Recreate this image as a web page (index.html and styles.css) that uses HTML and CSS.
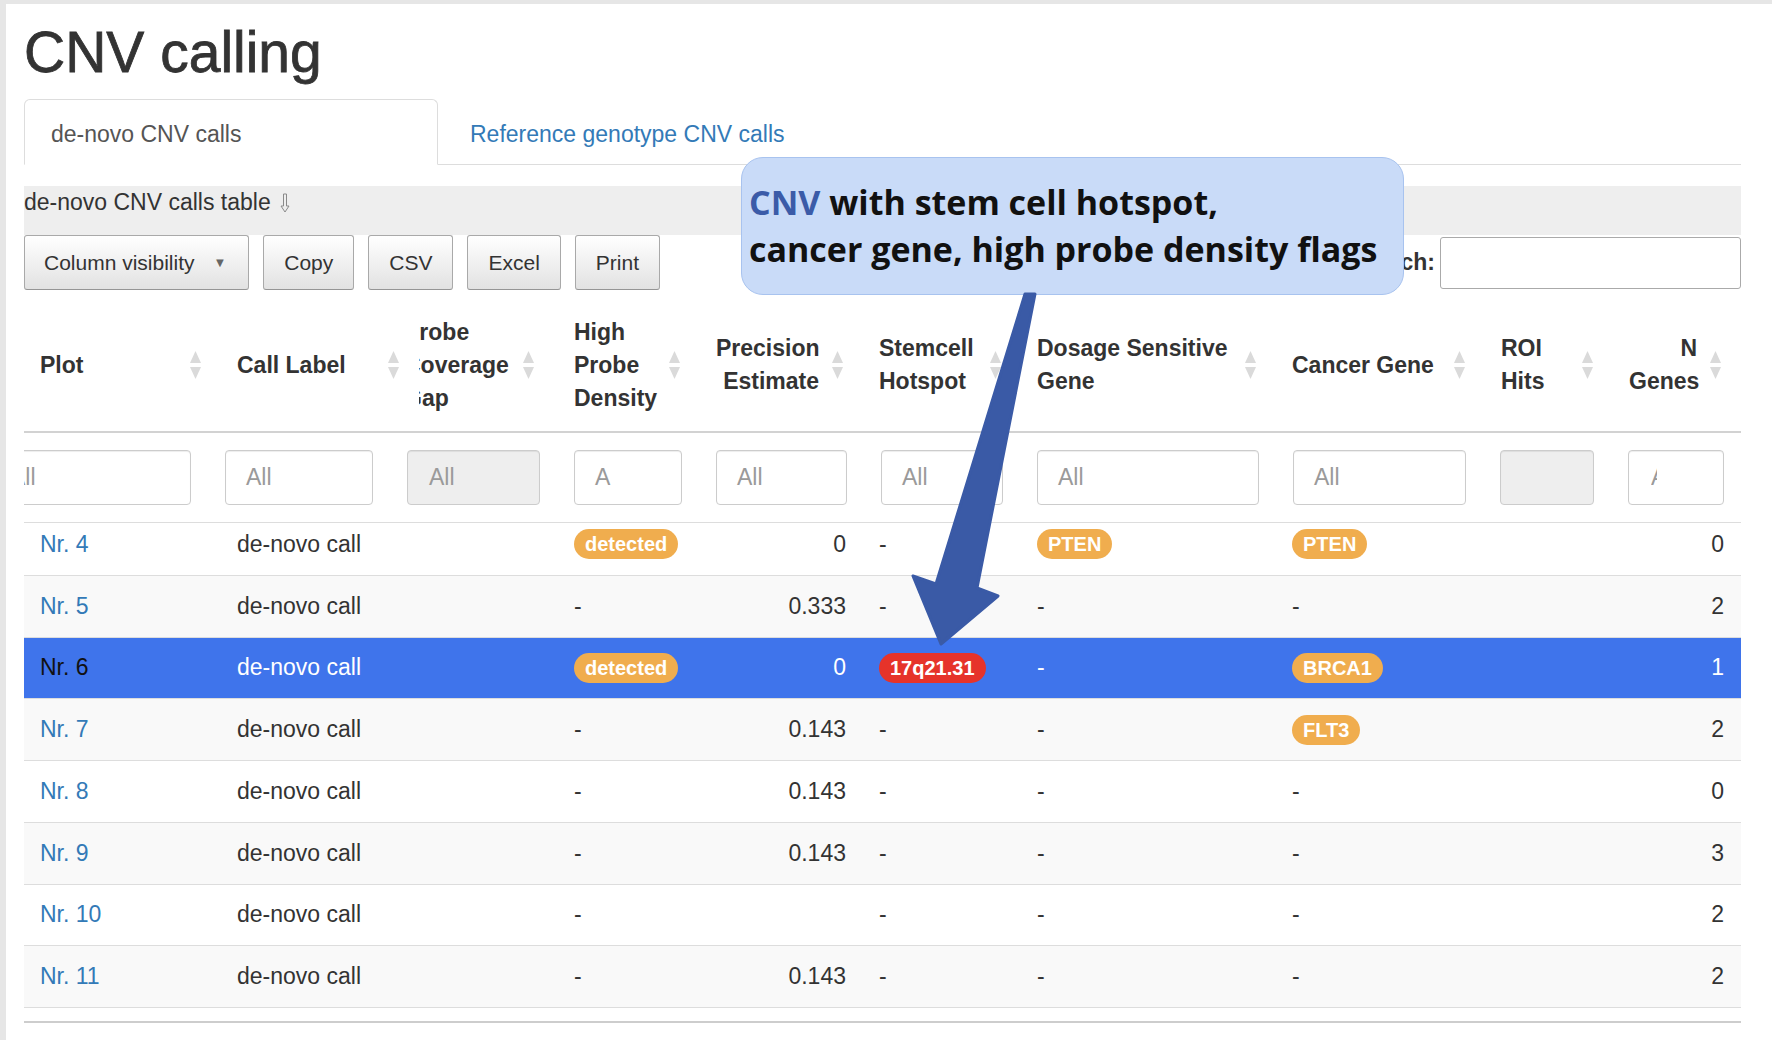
FILE: index.html
```html
<!DOCTYPE html>
<html>
<head>
<meta charset="utf-8">
<title>CNV calling</title>
<link rel="stylesheet" href="styles.css">
</head>
<body>
<div class="page">
  <h1 class="title">CNV calling</h1>
  <ul class="tabs">
    <li class="tab active"><a>de-novo CNV calls</a></li>
    <li class="tab"><a>Reference genotype CNV calls</a></li>
  </ul>
  <div class="caption">de-novo CNV calls table <svg class="cap-arrow" width="10" height="20" viewBox="0 0 10 20"><path d="M3.5 1 H6.5 V13 H9 L5 19 L1 13 H3.5 Z" fill="none" stroke="#8a8a8a" stroke-width="1"/></svg></div>
  <div class="controls">
    <div class="buttons">
      <button class="btn btn-colvis">Column visibility <span class="caret">&#9660;</span></button>
      <button class="btn">Copy</button>
      <button class="btn">CSV</button>
      <button class="btn">Excel</button>
      <button class="btn">Print</button>
    </div>
    <div class="search"><span class="search-label">Search:</span><span class="search-input"></span></div>
  </div>

  <div class="cols head">
    <div class="th"><span class="lbl">Plot</span><svg class="sort" viewBox="0 0 11 28"><polygon points="5.5,0 11,12 0,12"/><polygon points="0,16 11,16 5.5,28"/></svg></div>
    <div class="th"><span class="lbl">Call Label</span><svg class="sort" viewBox="0 0 11 28"><polygon points="5.5,0 11,12 0,12"/><polygon points="0,16 11,16 5.5,28"/></svg></div>
    <div class="th clip"><span class="lbl"><span class="shift">Probe<br>Coverage<br>Gap</span></span><svg class="sort" viewBox="0 0 11 28"><polygon points="5.5,0 11,12 0,12"/><polygon points="0,16 11,16 5.5,28"/></svg></div>
    <div class="th"><span class="lbl">High<br>Probe<br>Density</span><svg class="sort" viewBox="0 0 11 28"><polygon points="5.5,0 11,12 0,12"/><polygon points="0,16 11,16 5.5,28"/></svg></div>
    <div class="th num"><span class="lbl">Precision<br>Estimate</span><svg class="sort" viewBox="0 0 11 28"><polygon points="5.5,0 11,12 0,12"/><polygon points="0,16 11,16 5.5,28"/></svg></div>
    <div class="th"><span class="lbl">Stemcell<br>Hotspot</span><svg class="sort" viewBox="0 0 11 28"><polygon points="5.5,0 11,12 0,12"/><polygon points="0,16 11,16 5.5,28"/></svg></div>
    <div class="th"><span class="lbl">Dosage Sensitive<br>Gene</span><svg class="sort" viewBox="0 0 11 28"><polygon points="5.5,0 11,12 0,12"/><polygon points="0,16 11,16 5.5,28"/></svg></div>
    <div class="th"><span class="lbl">Cancer Gene</span><svg class="sort" viewBox="0 0 11 28"><polygon points="5.5,0 11,12 0,12"/><polygon points="0,16 11,16 5.5,28"/></svg></div>
    <div class="th"><span class="lbl">ROI<br>Hits</span><svg class="sort" viewBox="0 0 11 28"><polygon points="5.5,0 11,12 0,12"/><polygon points="0,16 11,16 5.5,28"/></svg></div>
    <div class="th num"><span class="lbl">N<br>Genes</span><svg class="sort" viewBox="0 0 11 28"><polygon points="5.5,0 11,12 0,12"/><polygon points="0,16 11,16 5.5,28"/></svg></div>
  </div>

  <div class="filters">
    <div class="f f-plot">All</div>
    <div class="f f-call">All</div>
    <div class="f f-probe disabled">All</div>
    <div class="f f-high">A</div>
    <div class="f f-prec">All</div>
    <div class="f f-stem">All</div>
    <div class="f f-dos">All</div>
    <div class="f f-can">All</div>
    <div class="f f-roi disabled"></div>
    <div class="f f-n"><span class="cut">A</span></div>
  </div>

  <div class="tbody">
    <div class="rows">
      <div class="cols row">
        <div class="td"><a class="link">Nr. 4</a></div><div class="td">de-novo call</div><div class="td"></div>
        <div class="td"><span class="badge">detected</span></div><div class="td num">0</div><div class="td">-</div>
        <div class="td"><span class="badge">PTEN</span></div><div class="td"><span class="badge">PTEN</span></div><div class="td"></div><div class="td num">0</div>
      </div>
      <div class="cols row alt">
        <div class="td"><a class="link">Nr. 5</a></div><div class="td">de-novo call</div><div class="td"></div>
        <div class="td">-</div><div class="td num">0.333</div><div class="td">-</div>
        <div class="td">-</div><div class="td">-</div><div class="td"></div><div class="td num">2</div>
      </div>
      <div class="cols row sel">
        <div class="td"><a class="link">Nr. 6</a></div><div class="td">de-novo call</div><div class="td"></div>
        <div class="td"><span class="badge">detected</span></div><div class="td num">0</div><div class="td"><span class="badge red">17q21.31</span></div>
        <div class="td">-</div><div class="td"><span class="badge">BRCA1</span></div><div class="td"></div><div class="td num">1</div>
      </div>
      <div class="cols row alt">
        <div class="td"><a class="link">Nr. 7</a></div><div class="td">de-novo call</div><div class="td"></div>
        <div class="td">-</div><div class="td num">0.143</div><div class="td">-</div>
        <div class="td">-</div><div class="td"><span class="badge">FLT3</span></div><div class="td"></div><div class="td num">2</div>
      </div>
      <div class="cols row">
        <div class="td"><a class="link">Nr. 8</a></div><div class="td">de-novo call</div><div class="td"></div>
        <div class="td">-</div><div class="td num">0.143</div><div class="td">-</div>
        <div class="td">-</div><div class="td">-</div><div class="td"></div><div class="td num">0</div>
      </div>
      <div class="cols row alt">
        <div class="td"><a class="link">Nr. 9</a></div><div class="td">de-novo call</div><div class="td"></div>
        <div class="td">-</div><div class="td num">0.143</div><div class="td">-</div>
        <div class="td">-</div><div class="td">-</div><div class="td"></div><div class="td num">3</div>
      </div>
      <div class="cols row">
        <div class="td"><a class="link">Nr. 10</a></div><div class="td">de-novo call</div><div class="td"></div>
        <div class="td">-</div><div class="td num"></div><div class="td">-</div>
        <div class="td">-</div><div class="td">-</div><div class="td"></div><div class="td num">2</div>
      </div>
      <div class="cols row alt">
        <div class="td"><a class="link">Nr. 11</a></div><div class="td">de-novo call</div><div class="td"></div>
        <div class="td">-</div><div class="td num">0.143</div><div class="td">-</div>
        <div class="td">-</div><div class="td">-</div><div class="td"></div><div class="td num">2</div>
      </div>
    </div>
  </div>
</div>

<div class="callout"><span class="cnv">CNV</span> with stem cell hotspot,<br>cancer gene, high probe density flags</div>
<svg class="arrow" width="1772" height="1040" viewBox="0 0 1772 1040">
  <polygon points="1025,294 1035,294 977,588 998,596 941,644 913,576 936,584" fill="#3a5aa6" stroke="#3a5aa6" stroke-width="3" stroke-linejoin="round"/>
</svg>
</body>
</html>
```

FILE: styles.css
```css
* { box-sizing: border-box; }

html, body {
  margin: 0;
  padding: 0;
}

body {
  background: #e6e6e6;
  font-family: "Liberation Sans", Arial, Helvetica, sans-serif;
  font-size: 23px;
  color: #333;
  position: relative;
  width: 1772px;
  height: 1040px;
  overflow: hidden;
}

.page {
  margin: 4px 0 0 6px;
  padding: 16px 31px 0 18px;
  background: #fff;
  height: 1036px;
}

.title {
  margin: 0 0 15px;
  font-size: 57px;
  line-height: 64px;
  font-weight: 400;
  color: #333;
  -webkit-text-stroke: 0.8px #333;
}

/* tabs */
.tabs {
  list-style: none;
  margin: 0;
  padding: 0;
  display: flex;
  border-bottom: 1px solid #ddd;
}
.tab {
  margin: 0 5px -1px 0;
}
.tab a {
  display: block;
  padding: 18px 26px 13px;
  line-height: 33px;
  border: 1px solid transparent;
  border-radius: 6px 6px 0 0;
  color: #337ab7;
}
.tab.active a {
  width: 414px;
  color: #555;
  background: #fff;
  border-color: #ddd;
  border-bottom-color: transparent;
}

/* caption */
.caption {
  margin-top: 21px;
  background: #eee;
  line-height: 33px;
  padding-bottom: 16px;
  color: #333;
}
.cap-arrow {
  vertical-align: -3px;
  margin-left: 3px;
}

/* controls */
.controls {
  display: flex;
  justify-content: space-between;
  align-items: center;
  height: 55px;
}
.buttons {
  display: flex;
  gap: 14px;
}
.btn {
  font-family: "Liberation Sans", Arial, sans-serif;
  font-size: 21px;
  color: #333;
  height: 55px;
  padding: 0 20px;
  border: 1px solid #a9a9a9;
  border-bottom-color: #959595;
  border-radius: 3px;
  background: linear-gradient(to bottom, #ffffff 0%, #f2f2f2 45%, #e2e2e2 100%);
}
.btn-colvis {
  padding: 0 22px 0 19px;
}
.caret {
  font-size: 13px;
  color: #666;
  margin-left: 13px;
  vertical-align: 3px;
}
.search {
  display: flex;
  align-items: center;
}
.search-label {
  font-weight: 700;
  margin-right: 5px;
}
.search-input {
  display: block;
  width: 301px;
  height: 52px;
  border: 1px solid #aaa;
  border-radius: 3px;
  background: #fff;
}

/* table grid */
.cols {
  display: grid;
  grid-template-columns: 197px 198px 139px 142px 163px 158px 255px 209px 128px 128px;
}

.head {
  margin-top: 9px;
  height: 134px;
  border-bottom: 2px solid #d2d2d2;
}
.th {
  display: flex;
  align-items: center;
  padding: 0 20px 0 16px;
  font-weight: 700;
  line-height: 33px;
  color: #333;
  white-space: nowrap;
}
.th .lbl {
  flex: 1;
  min-width: 0;
}
.th.num .lbl {
  text-align: right;
  margin-right: 13px;
}
.th.clip {
  padding-left: 0;
  padding-right: 24px;
}
.th.clip .lbl {
  overflow: hidden;
}
.th.clip .shift {
  display: block;
  margin-left: -15px;
}
.sort {
  flex: none;
  width: 11px;
  height: 28px;
  fill: #dadada;
}

/* filters */
.filters {
  display: flex;
  gap: 34px;
  padding: 17px 0;
  border-bottom: 1px solid #ddd;
  overflow: hidden;
}
.f {
  flex: none;
  height: 55px;
  border: 1px solid #ccc;
  border-radius: 4px;
  padding-left: 20px;
  line-height: 53px;
  color: #9a9a9a;
  background: #fff;
  box-shadow: inset 0 1px 1px rgba(0, 0, 0, 0.075);
  overflow: hidden;
  white-space: nowrap;
}
.f.disabled {
  background: #eee;
}
.f-plot { width: 197px; margin-left: -30px; padding-left: 15px; }
.f-call { width: 148px; }
.f-probe { width: 133px; padding-left: 21px; }
.f-high { width: 108px; }
.f-prec { width: 131px; }
.f-stem { width: 122px; }
.f-dos { width: 222px; }
.f-can { width: 173px; }
.f-roi { width: 94px; }
.f-n { width: 96px; padding-left: 22px; }
.cut {
  display: inline-block;
  width: 6px;
  overflow: hidden;
  vertical-align: top;
}

/* body */
.tbody {
  height: 500px;
  overflow: hidden;
  border-bottom: 2px solid #cdcdcd;
}
.rows {
  margin-top: -9px;
}
.row {
  height: 61.75px;
  border-bottom: 1px solid #ddd;
  align-items: center;
  background: #fff;
}
.row.alt {
  background: #f9f9f9;
}
.row.sel {
  background: #3f74eb;
  color: #fff;
}
.td {
  padding: 0 18px 0 16px;
  white-space: nowrap;
}
.td.num {
  text-align: right;
  padding-right: 17px;
}
.link {
  color: #337ab7;
  text-decoration: none;
}
.row.sel .link {
  color: #111;
}
.badge {
  display: inline-block;
  height: 30px;
  line-height: 30px;
  padding: 0 11px;
  border-radius: 15px;
  background: #f0ad4e;
  color: #fff;
  font-size: 20px;
  font-weight: 700;
  vertical-align: middle;
}
.badge.red {
  background: #e6332a;
}

/* annotation overlay */
.callout {
  position: absolute;
  left: 741px;
  top: 157px;
  width: 663px;
  height: 138px;
  background: #c9dbf8;
  border: 1px solid #a8c3ef;
  border-radius: 22px;
  padding: 21px 0 0 7px;
  font-family: "Open Sans", "Noto Sans", sans-serif;
  font-weight: 700;
  font-size: 34px;
  line-height: 47px;
  color: #111;
  white-space: nowrap;
}
.cnv {
  color: #3b5ba8;
}
.arrow {
  position: absolute;
  left: 0;
  top: 0;
  pointer-events: none;
}
```
